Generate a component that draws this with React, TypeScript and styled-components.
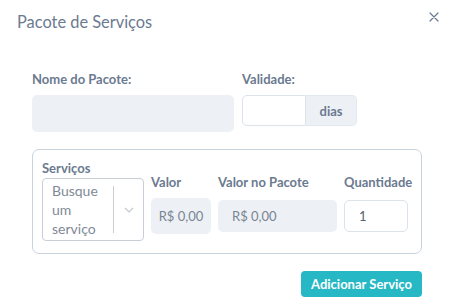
import styled, { createGlobalStyle } from "styled-components";

const GlobalStyle = createGlobalStyle`
  html, body {
    margin: 0;
    padding: 0;
    background: #ffffff;
  }
  body {
    font-family: Lato, "Open Sans", "Liberation Sans", sans-serif;
    color: #6b7a90;
  }
  * {
    box-sizing: border-box;
  }
`;

const Modal = styled.div`
  width: 452px;
  height: 308px;
  background: #ffffff;
`;

const Header = styled.div`
  display: flex;
  align-items: center;
  justify-content: space-between;
  height: 42px;
  padding: 0 12px 0 17px;
`;

const Title = styled.h2`
  margin: 0;
  font-size: 16.4px;
  font-weight: 400;
  color: #6b7a90;
`;

const CloseButton = styled.button`
  display: flex;
  align-items: center;
  justify-content: center;
  width: 12px;
  height: 12px;
  padding: 0;
  margin-top: -8px;
  border: none;
  background: none;
  color: #6b7a90;
  cursor: pointer;
`;

const Body = styled.div`
  padding: 28px 30px 0 32px;
`;

const TopRow = styled.div`
  display: flex;
  gap: 8px;
`;

const Field = styled.div<{ $width?: number }>`
  display: flex;
  flex-direction: column;
  width: ${(p) => (p.$width ? `${p.$width}px` : "auto")};
`;

const Label = styled.label<{ $gap?: number }>`
  display: block;
  font-size: 13px;
  line-height: 18px;
  font-weight: 700;
  color: #6b7a90;
  margin-bottom: ${(p) => p.$gap ?? 7}px;
  white-space: nowrap;
`;

const FilledInput = styled.div<{ $height: number }>`
  height: ${(p) => p.$height}px;
  border-radius: 5px;
  background: #edf1f5;
`;

const InputGroup = styled.div`
  display: flex;
  height: 31px;
`;

const PlainInput = styled.input<{ $width: number; $flat?: boolean }>`
  width: ${(p) => p.$width}px;
  height: ${(p) => (p.$flat ? 31 : 32)}px;
  padding: 0 14px;
  border: 1px solid #dde3ea;
  border-radius: ${(p) => (p.$flat ? "5px 0 0 5px" : "5px")};
  background: #ffffff;
  font-family: inherit;
  font-size: 13px;
  color: #555f6d;
  outline: none;
`;

const Addon = styled.span`
  display: flex;
  align-items: center;
  justify-content: center;
  width: 51px;
  border: 1px solid #e3e8ee;
  border-left: none;
  border-radius: 0 5px 5px 0;
  background: #edf1f5;
  font-size: 13px;
  font-weight: 700;
  color: #6b7a90;
`;

const ServiceBox = styled.div`
  display: flex;
  gap: 7px;
  align-items: flex-start;
  margin-top: 17px;
  width: 390px;
  height: 105px;
  padding: 9px 8px 0 9px;
  border: 1px solid #c9d3de;
  border-radius: 7px;
`;

const Column = styled.div<{ $offset?: number }>`
  display: flex;
  flex-direction: column;
  padding-top: ${(p) => p.$offset ?? 0}px;
`;

const Select = styled.div`
  display: flex;
  width: 102px;
  height: 63px;
  border: 1px solid #c9ced6;
  border-radius: 4px;
  background: #ffffff;
`;

const SelectValue = styled.div`
  flex: 1;
  padding: 2px 6px 2px 9px;
  font-size: 14px;
  line-height: 19px;
  color: #7f8996;
`;

const Indicator = styled.div`
  display: flex;
  align-items: center;
  justify-content: center;
  width: 30px;
  margin: 7px 0;
  border-left: 1px solid #cccccc;
  color: #c2c7ce;
`;

const ControlSlot = styled.div`
  display: flex;
  align-items: center;
  height: 36px;
`;

const MoneyBox = styled.div<{ $width: number; $height: number; $center?: boolean }>`
  display: flex;
  align-items: center;
  justify-content: ${(p) => (p.$center ? "center" : "flex-start")};
  width: ${(p) => p.$width}px;
  height: ${(p) => p.$height}px;
  padding: 0 ${(p) => (p.$center ? 0 : 14)}px;
  border-radius: 5px;
  background: #edf1f5;
  font-size: 13px;
  color: #7a8491;
  white-space: nowrap;
`;

const Footer = styled.div`
  display: flex;
  justify-content: flex-end;
  padding-top: 17px;
`;

const AddButton = styled.button`
  height: 26px;
  padding: 0 10px;
  border: none;
  border-radius: 4px;
  background: #26b8c4;
  color: #ffffff;
  font-family: inherit;
  font-size: 13px;
  font-weight: 700;
  cursor: pointer;
`;

const App = () => {
  return (
    <>
      <GlobalStyle />
      <Modal>
        <Header>
          <Title>Pacote de Serviços</Title>
          <CloseButton aria-label="Fechar">
            <svg width="10" height="10" viewBox="0 0 10 10">
              <path
                d="M1 1L9 9M9 1L1 9"
                stroke="currentColor"
                strokeWidth="1.2"
                strokeLinecap="round"
              />
            </svg>
          </CloseButton>
        </Header>
        <Body>
          <TopRow>
            <Field $width={202}>
              <Label $gap={7}>Nome do Pacote:</Label>
              <FilledInput $height={37} />
            </Field>
            <Field>
              <Label $gap={7}>Validade:</Label>
              <InputGroup>
                <PlainInput $width={64} $flat />
                <Addon>dias</Addon>
              </InputGroup>
            </Field>
          </TopRow>
          <ServiceBox>
            <Column>
              <Label $gap={1}>Serviços</Label>
              <Select>
                <SelectValue>Busque um serviço</SelectValue>
                <Indicator>
                  <svg width="10" height="6" viewBox="0 0 10 6">
                    <path
                      d="M1 1L5 5L9 1"
                      fill="none"
                      stroke="currentColor"
                      strokeWidth="1.1"
                    />
                  </svg>
                </Indicator>
              </Select>
            </Column>
            <Column $offset={14}>
              <Label $gap={7}>Valor</Label>
              <ControlSlot>
                <MoneyBox $width={60} $height={36} $center>
                  R$ 0,00
                </MoneyBox>
              </ControlSlot>
            </Column>
            <Column $offset={14}>
              <Label $gap={7}>Valor no Pacote</Label>
              <ControlSlot>
                <MoneyBox $width={119} $height={32}>
                  R$ 0,00
                </MoneyBox>
              </ControlSlot>
            </Column>
            <Column $offset={14}>
              <Label $gap={7}>Quantidade</Label>
              <ControlSlot>
                <PlainInput $width={64} defaultValue="1" />
              </ControlSlot>
            </Column>
          </ServiceBox>
          <Footer>
            <AddButton>Adicionar Serviço</AddButton>
          </Footer>
        </Body>
      </Modal>
    </>
  );
};

export default App;
